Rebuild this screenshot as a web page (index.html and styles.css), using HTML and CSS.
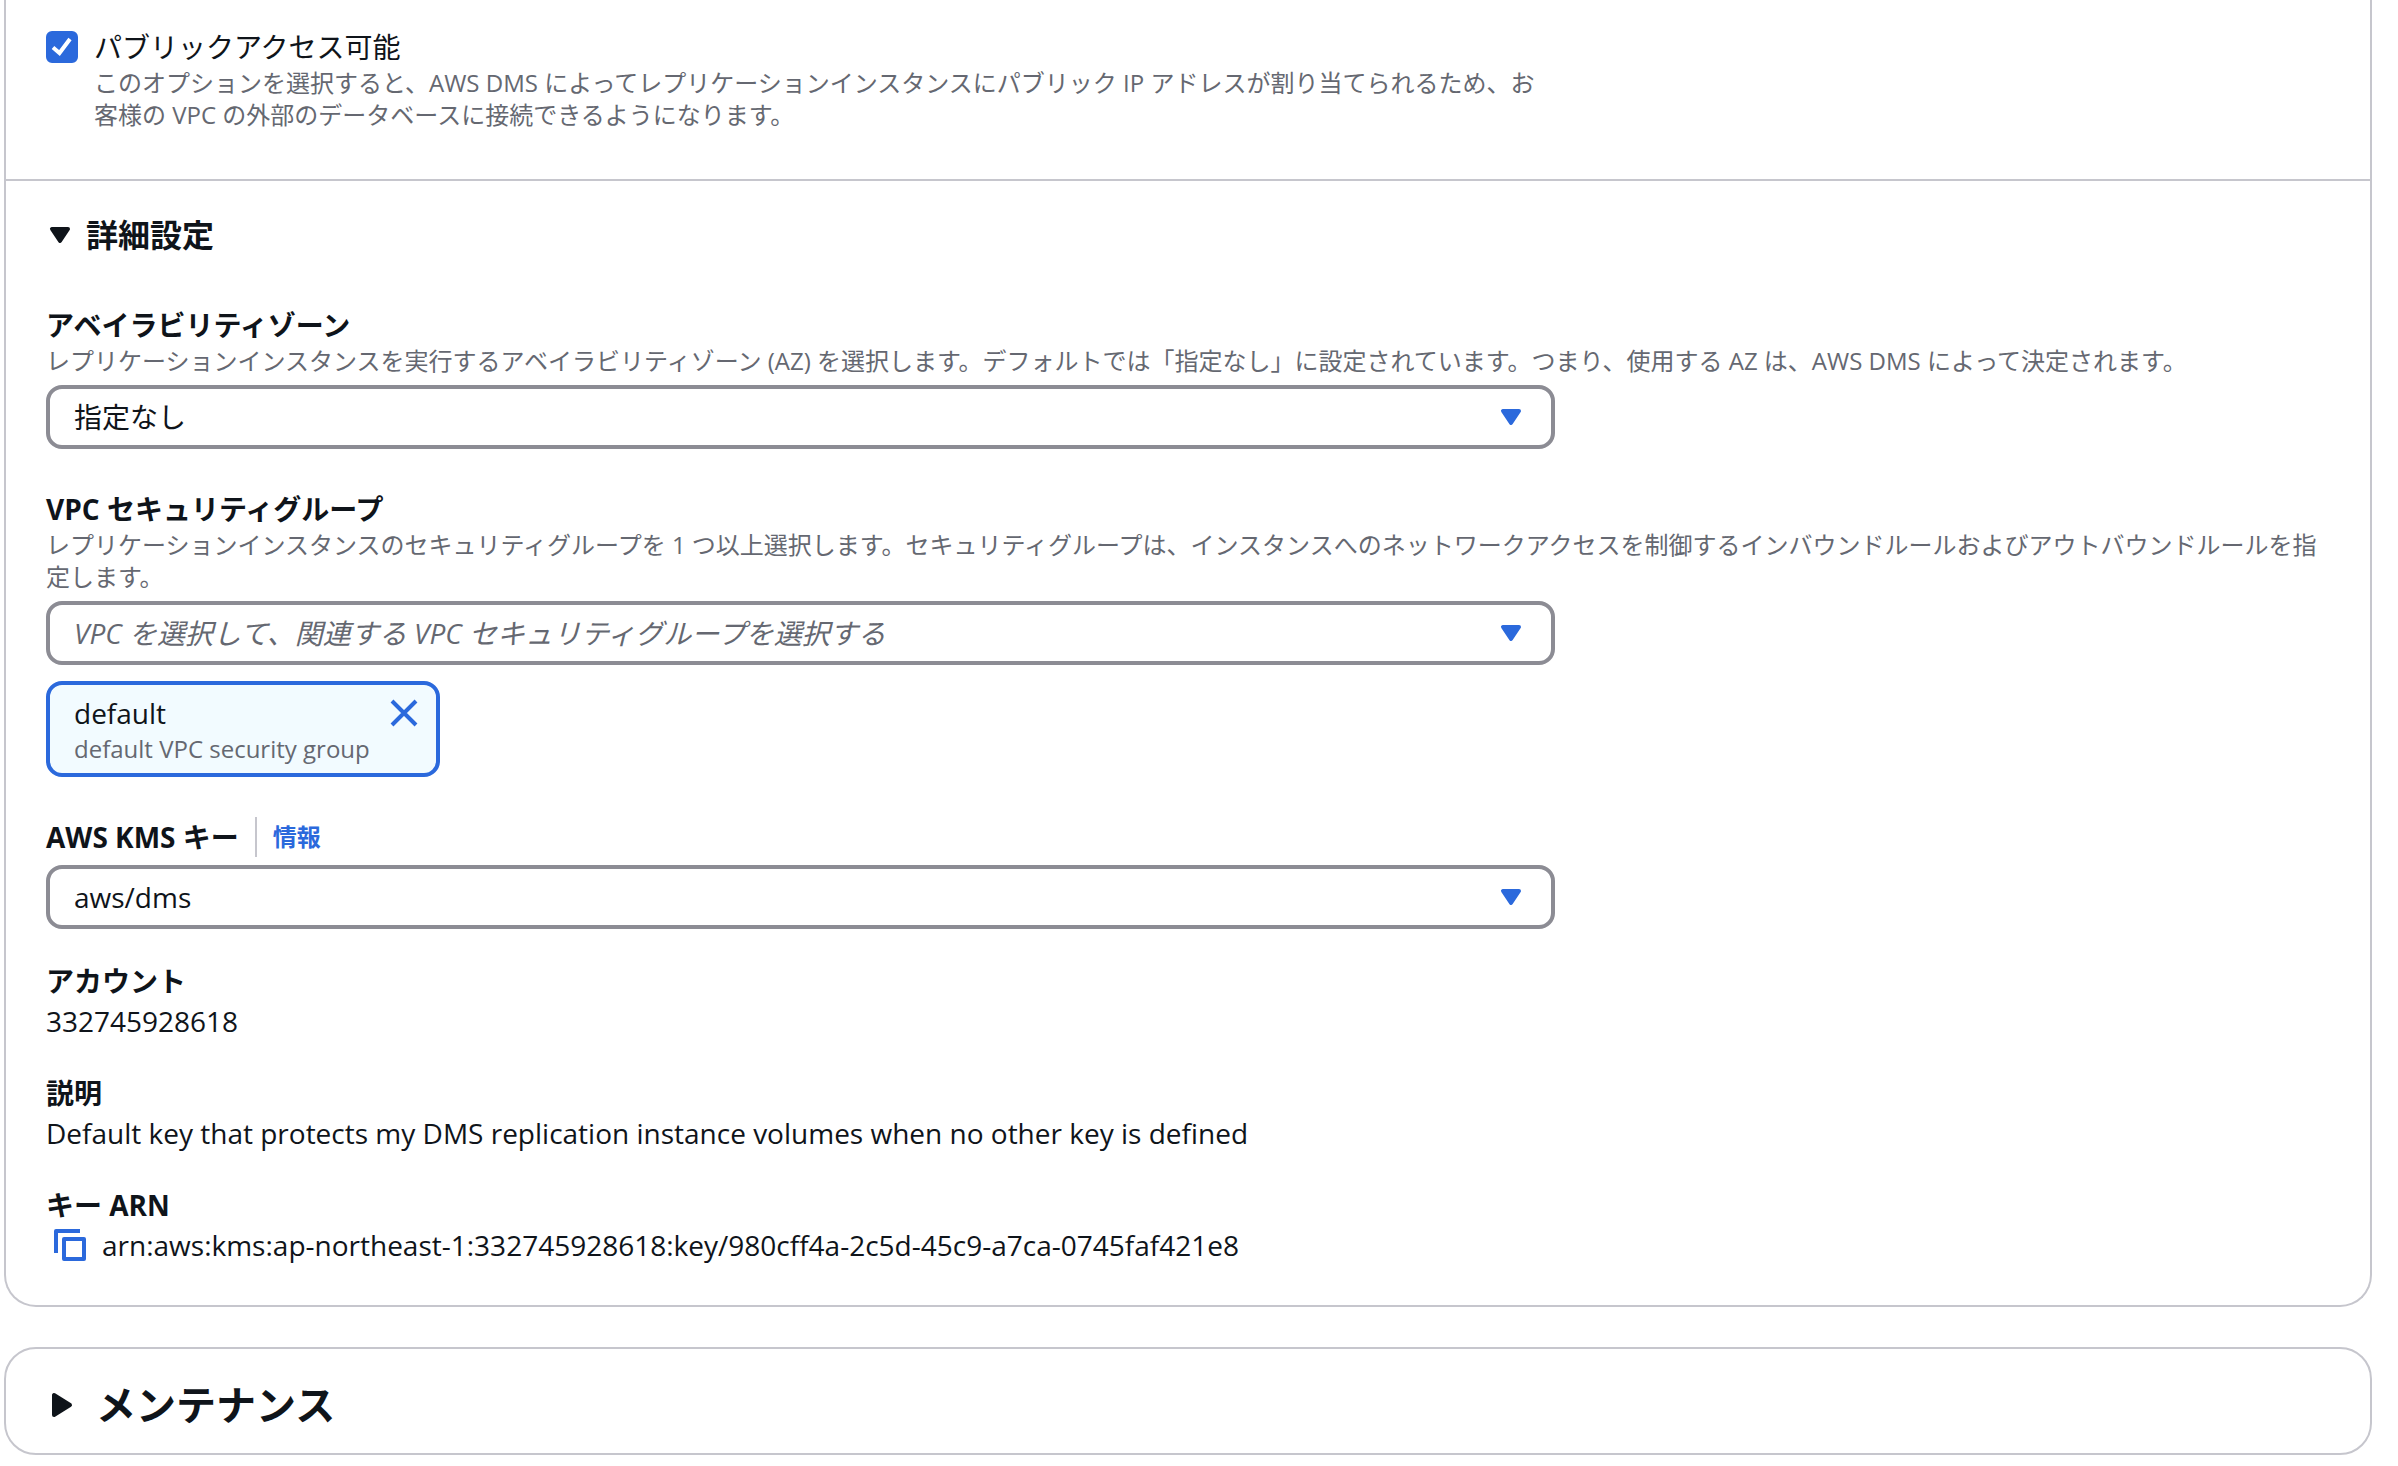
FILE: index.html
```html
<!DOCTYPE html>
<html lang="ja">
<head>
<meta charset="utf-8">
<meta name="viewport" content="width=device-width, initial-scale=1">
<title>レプリケーションインスタンスの作成</title>
<link rel="stylesheet" href="styles.css">
</head>
<body>
<main class="page">
  <section class="card card-continued">
    <div class="card-body public-access">
      <div class="choice narrow">
        <input class="checkbox" type="checkbox" id="public" checked aria-describedby="public-desc">
        <div>
          <label class="choice-label" for="public">パブリックアクセス可能</label>
          <p class="hint" id="public-desc">このオプションを選択すると、AWS DMS によってレプリケーションインスタンスにパブリック IP アドレスが割り当てられるため、お客様の VPC の外部のデータベースに接続できるようになります。</p>
        </div>
      </div>
    </div>

    <div class="card-body advanced">
      <h3 class="subheading">
        <button class="toggle toggle-small" type="button" aria-expanded="true">
          <svg class="icon-toggle-small" viewBox="0 0 28 28" aria-hidden="true"><path d="M6 8h16l-8 12z" fill="currentColor" stroke="currentColor" stroke-width="4" stroke-linejoin="round"/></svg>
          詳細設定
        </button>
      </h3>

      <div class="fields">
        <div class="field">
          <label class="label" for="az">アベイラビリティゾーン</label>
          <p class="hint">レプリケーションインスタンスを実行するアベイラビリティゾーン (AZ) を選択します。デフォルトでは「指定なし」に設定されています。つまり、使用する AZ は、AWS DMS によって決定されます。</p>
          <div class="select-box narrow">
            <select class="select" id="az"><option>指定なし</option></select>
            <svg class="caret" viewBox="0 0 32 32" aria-hidden="true"><path d="M8 10h16l-8 12z" fill="currentColor" stroke="currentColor" stroke-width="4" stroke-linejoin="round"/></svg>
          </div>
        </div>

        <div class="field">
          <label class="label" for="sg">VPC セキュリティグループ</label>
          <p class="hint">レプリケーションインスタンスのセキュリティグループを 1 つ以上選択します。セキュリティグループは、インスタンスへのネットワークアクセスを制御するインバウンドルールおよびアウトバウンドルールを指定します。</p>
          <div class="select-box narrow">
            <select class="select select-placeholder" id="sg"><option>VPC を選択して、関連する VPC セキュリティグループを選択する</option></select>
            <svg class="caret" viewBox="0 0 32 32" aria-hidden="true"><path d="M8 10h16l-8 12z" fill="currentColor" stroke="currentColor" stroke-width="4" stroke-linejoin="round"/></svg>
          </div>
          <div class="token">
            <div>
              <div class="token-name">default</div>
              <div class="hint">default VPC security group</div>
            </div>
            <button class="token-remove" type="button" aria-label="default を削除">
              <svg class="icon" viewBox="0 0 32 32" aria-hidden="true"><path d="M4 4l24 24M28 4L4 28" fill="none" stroke="currentColor" stroke-width="4"/></svg>
            </button>
          </div>
        </div>

        <div class="field">
          <div class="label-row">
            <label class="label" for="kms">AWS KMS キー</label>
            <a class="info" href="#">情報</a>
          </div>
          <div class="select-box narrow">
            <select class="select" id="kms"><option>aws/dms</option></select>
            <svg class="caret" viewBox="0 0 32 32" aria-hidden="true"><path d="M8 10h16l-8 12z" fill="currentColor" stroke="currentColor" stroke-width="4" stroke-linejoin="round"/></svg>
          </div>
        </div>
      </div>

      <dl class="details">
        <div>
          <dt class="label">アカウント</dt>
          <dd class="value">332745928618</dd>
        </div>
        <div>
          <dt class="label">説明</dt>
          <dd class="value">Default key that protects my DMS replication instance volumes when no other key is defined</dd>
        </div>
        <div>
          <dt class="label">キー ARN</dt>
          <dd class="value value-copy">
            <button class="copy" type="button" aria-label="ARN をコピー">
              <svg class="icon" viewBox="0 0 32 32" aria-hidden="true"><path d="M2 24V2h24M10 10h20v20H10z" fill="none" stroke="currentColor" stroke-width="4" stroke-linejoin="round"/></svg>
            </button>
            <span>arn:aws:kms:ap-northeast-1:332745928618:key/980cff4a-2c5d-45c9-a7ca-0745faf421e8</span>
          </dd>
        </div>
      </dl>
    </div>
  </section>

  <section class="card">
    <h2 class="card-heading">
      <button class="toggle toggle-large" type="button" aria-expanded="false">
        <svg class="icon" viewBox="0 0 32 32" aria-hidden="true"><path d="M8 6v20l16-10z" fill="currentColor" stroke="currentColor" stroke-width="4" stroke-linejoin="round"/></svg>
        メンテナンス
      </button>
    </h2>
  </section>
</main>
</body>
</html>
```

FILE: styles.css
```css
:root {
  --text: #0f141a;
  --muted: #656871;
  --accent: #2b69dc;
  --control: #8c8c94;
  --line: #c6c6cd;
}

* {
  box-sizing: border-box;
}

body {
  margin: 0;
  background: #fff;
  color: var(--text);
  font-family: "Open Sans", "Noto Sans CJK JP", sans-serif;
  font-size: 28px;
  line-height: 40px;
}

h2,
h3,
p,
dl,
dd {
  margin: 0;
}

button {
  padding: 0;
  border: 0;
  background: none;
  color: inherit;
  font: inherit;
  cursor: pointer;
}

svg {
  display: block;
  flex: none;
}

.page {
  display: flex;
  flex-direction: column;
  gap: 40px;
  padding: 0 26px 8px 4px;
}

.card {
  border: 2px solid var(--line);
  border-radius: 32px;
}

.card-continued {
  border-top: 0;
  border-top-left-radius: 0;
  border-top-right-radius: 0;
}

.card-body {
  padding: 0 40px;
}

.public-access {
  padding-top: 27px;
  padding-bottom: 48px;
}

.advanced {
  padding-top: 34px;
  padding-bottom: 40px;
  border-top: 2px solid var(--line);
}

.narrow {
  width: calc((100% - 20px) * 2 / 3);
}

.choice {
  display: flex;
  gap: 16px;
}

.choice-label {
  display: block;
}

.checkbox {
  appearance: none;
  flex: none;
  width: 32px;
  height: 32px;
  margin: 4px 0;
  border: 2px solid var(--control);
  border-radius: 6px;
}

.checkbox:checked {
  border-color: var(--accent);
  background: var(--accent) url("data:image/svg+xml,%3Csvg xmlns='http://www.w3.org/2000/svg' viewBox='0 0 28 28'%3E%3Cpath d='M5 14.500l6.500 5.500L22 6' fill='none' stroke='white' stroke-width='4'/%3E%3C/svg%3E") center / 28px 28px no-repeat;
}

.hint {
  color: var(--muted);
  font-size: 24px;
  line-height: 32px;
}

.subheading {
  margin-bottom: 50px;
}

.toggle {
  display: flex;
  align-items: center;
  font-weight: 700;
}

.toggle-small {
  gap: 12px;
  font-size: 32px;
  line-height: 40px;
}

.icon-toggle-small {
  width: 28px;
  height: 28px;
}

.toggle-large {
  gap: 18px;
  font-size: 40px;
  line-height: 48px;
}

.icon {
  width: 32px;
  height: 32px;
}

.fields {
  display: flex;
  flex-direction: column;
  gap: 40px;
}

.label {
  display: block;
  font-weight: 700;
}

.label-row {
  display: flex;
  gap: 16px;
}

.info {
  padding-left: 16px;
  border-left: 2px solid var(--line);
  color: var(--accent);
  font-size: 24px;
  font-weight: 700;
  text-decoration: none;
}

.select-box {
  display: grid;
  align-items: center;
  margin-top: 8px;
}

.select,
.caret {
  grid-area: 1 / 1;
}

.select {
  appearance: none;
  width: 100%;
  height: 64px;
  padding: 0 72px 0 24px;
  border: 4px solid var(--control);
  border-radius: 16px;
  background: #fff;
  color: inherit;
  font: inherit;
}

.select-placeholder {
  color: var(--muted);
  font-style: italic;
}

.caret {
  justify-self: end;
  width: 32px;
  height: 32px;
  margin-right: 28px;
  color: var(--accent);
  pointer-events: none;
}

.token {
  display: flex;
  align-items: flex-start;
  gap: 18px;
  width: fit-content;
  margin-top: 16px;
  padding: 8px 16px 8px 24px;
  border: 4px solid var(--accent);
  border-radius: 16px;
  background: #f2fbff;
}

.token-remove {
  padding: 4px 0;
  color: var(--accent);
}

.details {
  display: flex;
  flex-direction: column;
  gap: 32px;
  margin-top: 32px;
}

.value-copy {
  display: flex;
  gap: 8px;
}

.copy {
  padding: 4px 8px;
  color: var(--accent);
}

.card-heading {
  padding: 32px 40px 24px;
}
```
